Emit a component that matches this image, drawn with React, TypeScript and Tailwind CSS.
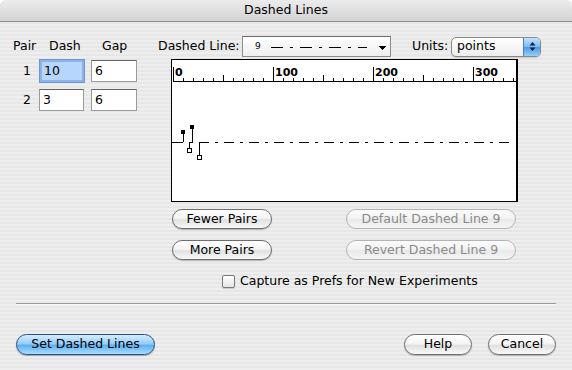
import React from 'react';

type PillProps = {
  label: string;
  className: string;
  disabled?: boolean;
  primary?: boolean;
};

const Pill = ({ label, className, disabled, primary }: PillProps) => {
  let tone =
    'border-[#6e6e6e] text-black bg-[linear-gradient(to_bottom,#ffffff_0%,#f4f4f4_45%,#e1e1e1_55%,#f8f8f8_100%)] shadow-[0_1px_1px_rgba(0,0,0,0.25)]';
  if (disabled) {
    tone =
      'border-[#b4b4b4] text-[#8a8a8a] bg-[linear-gradient(to_bottom,#fbfbfb_0%,#f3f3f3_45%,#e9e9e9_55%,#f6f6f6_100%)]';
  }
  if (primary) {
    tone =
      'border-[#2d4f8e] text-black bg-[linear-gradient(to_bottom,#d6edfe_0%,#97cdf9_45%,#5fb1f3_55%,#a8defe_100%)] shadow-[0_1px_1px_rgba(0,0,0,0.3)]';
  }
  return (
    <button
      type="button"
      className={`flex items-center justify-center rounded-full border text-[12.5px] leading-none ${tone} ${className}`}
    >
      {label}
    </button>
  );
};

const Field = ({ value, focused }: { value: string; focused?: boolean }) => (
  <div
    className={
      focused
        ? 'flex h-[22px] w-[44px] items-center border-2 border-[#8db2e8] bg-[#b7d6fd] pl-[2px] shadow-[0_0_0_1px_#6d97d8]'
        : 'flex h-[22px] items-center border border-[#9a9a9a] border-t-[#636363] bg-white pl-[3px]'
    }
  >
    {value}
  </div>
);

// ruler ticks every 10 points, 1px per point
const ticks = Array.from({ length: 35 }, (_, i) => i * 10);

const Ruler = () => (
  <svg width="345" height="141" shapeRendering="crispEdges">
    <line x1="1" y1="21.5" x2="345" y2="21.5" stroke="#000" />
    {ticks.map((t) => {
      const top = t % 100 === 0 ? 7 : t % 50 === 0 ? 15 : 18;
      return <line key={t} x1={t + 1.5} y1={top} x2={t + 1.5} y2="21" stroke="#000" />;
    })}
    {[0, 100, 200, 300].map((n) => (
      <text
        key={n}
        x={n + 3}
        y="16"
        fontFamily="DejaVu Sans, sans-serif"
        fontWeight="bold"
        fontSize="11"
        fill="#000"
      >
        {n}
      </text>
    ))}

    {/* dashed line with pair handles */}
    <line x1="0" y1="82.5" x2="11" y2="82.5" stroke="#000" />
    <rect x="9" y="70" width="4" height="4" fill="#000" />
    <line x1="11.5" y1="74" x2="11.5" y2="82" stroke="#000" />
    <rect x="18" y="65" width="4" height="4" fill="#000" />
    <line x1="20.5" y1="69" x2="20.5" y2="82" stroke="#000" />
    <line x1="17" y1="82.5" x2="21" y2="82.5" stroke="#000" />
    <line x1="17.5" y1="82" x2="17.5" y2="88" stroke="#000" />
    <rect x="15.5" y="88.5" width="4" height="4" fill="#fff" stroke="#000" />
    <line x1="27.5" y1="82" x2="27.5" y2="95" stroke="#000" />
    <rect x="25.5" y="95.5" width="4" height="4" fill="#fff" stroke="#000" />
    <line x1="27" y1="82.5" x2="339" y2="82.5" stroke="#000" strokeDasharray="10 6 3 6" />
  </svg>
);

const App = () => {
  return (
    <div className="h-[370px] w-[572px] bg-white font-['DejaVu_Sans',sans-serif] text-[12.5px] text-black">
      <div className="h-full overflow-hidden rounded-t-[6px] bg-[repeating-linear-gradient(180deg,#eeeeee_0px,#eeeeee_2px,#e7e7e7_2px,#e7e7e7_4px)]">
        <div className="flex h-[22px] items-center justify-center border-b border-[#8e8e8e] bg-[linear-gradient(to_bottom,#ececec,#d3d3d3)] text-[12.5px]">
          Dashed Lines
        </div>

        <div className="pt-[14px]">
          {/* header row */}
          <div className="flex h-[21px] items-center">
            <span className="ml-[13px] w-[36px]">Pair</span>
            <span className="w-[53px]">Dash</span>
            <span className="w-[56px]">Gap</span>
            <span className="w-[84px] whitespace-nowrap">Dashed Line:</span>
            <div className="flex h-[21px] w-[149px] items-center border border-[#8c8c8c] border-t-[#6c6c6c] bg-[linear-gradient(to_bottom,#ffffff,#eeeeee)]">
              <span className="ml-[12px] w-[16px] text-[9px]">9</span>
              <svg width="120" height="19" shapeRendering="crispEdges">
                <line x1="0" y1="10.5" x2="96" y2="10.5" stroke="#000" strokeDasharray="12 7 3 7" />
                <polygon points="107,9 115,9 111,13" fill="#000" />
              </svg>
            </div>
            <span className="ml-[21px] w-[39px]">Units:</span>
            <div className="flex h-[20px] w-[90px] items-center overflow-hidden rounded-[5px] border border-[#8a8a8a] bg-[linear-gradient(to_bottom,#ffffff,#ededed)] shadow-[0_1px_1px_rgba(0,0,0,0.15)]">
              <span className="flex-1 pl-[5px]">points</span>
              <div className="flex h-full w-[17px] items-center justify-center border-l border-[#5a7cb4] bg-[linear-gradient(to_bottom,#c3e2fc_0%,#7bbcf4_48%,#4d9cea_52%,#93cff9_100%)]">
                <svg width="7" height="11">
                  <polygon points="3.5,1 6.5,4.5 0.5,4.5" fill="#15233f" />
                  <polygon points="0.5,6.5 6.5,6.5 3.5,10" fill="#15233f" />
                </svg>
              </div>
            </div>
          </div>

          <div className="mt-[2px] flex">
            {/* pairs table */}
            <div className="flex w-[171px] flex-col gap-[7px] pt-[1px]">
              <div className="flex h-[22px] items-center">
                <span className="w-[31px] text-right">1</span>
                <div className="ml-[9px]">
                  <Field value="10" focused />
                </div>
                <div className="ml-[7px] w-[46px]">
                  <Field value="6" />
                </div>
              </div>
              <div className="flex h-[22px] items-center">
                <span className="w-[31px] text-right">2</span>
                <div className="ml-[8px] w-[45px]">
                  <Field value="3" />
                </div>
                <div className="ml-[7px] w-[46px]">
                  <Field value="6" />
                </div>
              </div>
            </div>

            {/* preview + actions */}
            <div className="flex w-[347px] flex-col">
              <div className="h-[143px] border border-r-2 border-black bg-white">
                <Ruler />
              </div>
              <div className="mt-[7px] flex justify-between pl-[1px] pr-[2px]">
                <Pill label="Fewer Pairs" className="h-[20px] w-[100px]" />
                <Pill label="Default Dashed Line 9" className="h-[20px] w-[170px]" disabled />
              </div>
              <div className="mt-[11px] flex justify-between pl-[1px] pr-[2px]">
                <Pill label="More Pairs" className="h-[20px] w-[100px]" />
                <Pill label="Revert Dashed Line 9" className="h-[20px] w-[170px]" disabled />
              </div>
              <div className="mt-[15px] flex h-[13px] items-center pl-[51px]">
                <div className="h-[13px] w-[13px] rounded-[2px] border border-[#7a7a7a] bg-[linear-gradient(to_bottom,#ffffff,#e4e4e4)] shadow-[0_1px_1px_rgba(0,0,0,0.15)]" />
                <span className="ml-[5px]">Capture as Prefs for New Experiments</span>
              </div>
            </div>
          </div>

          <div className="mx-[16px] mt-[15px] h-[2px] border-t border-b border-t-[#9c9c9c] border-b-[#f7f7f7]" />

          <div className="mt-[29px] flex justify-between px-[16px]">
            <Pill label="Set Dashed Lines" className="h-[21px] w-[139px]" primary />
            <div className="flex gap-[16px]">
              <Pill label="Help" className="h-[21px] w-[68px]" />
              <Pill label="Cancel" className="h-[21px] w-[68px]" />
            </div>
          </div>
        </div>
      </div>
    </div>
  );
};

export default App;
